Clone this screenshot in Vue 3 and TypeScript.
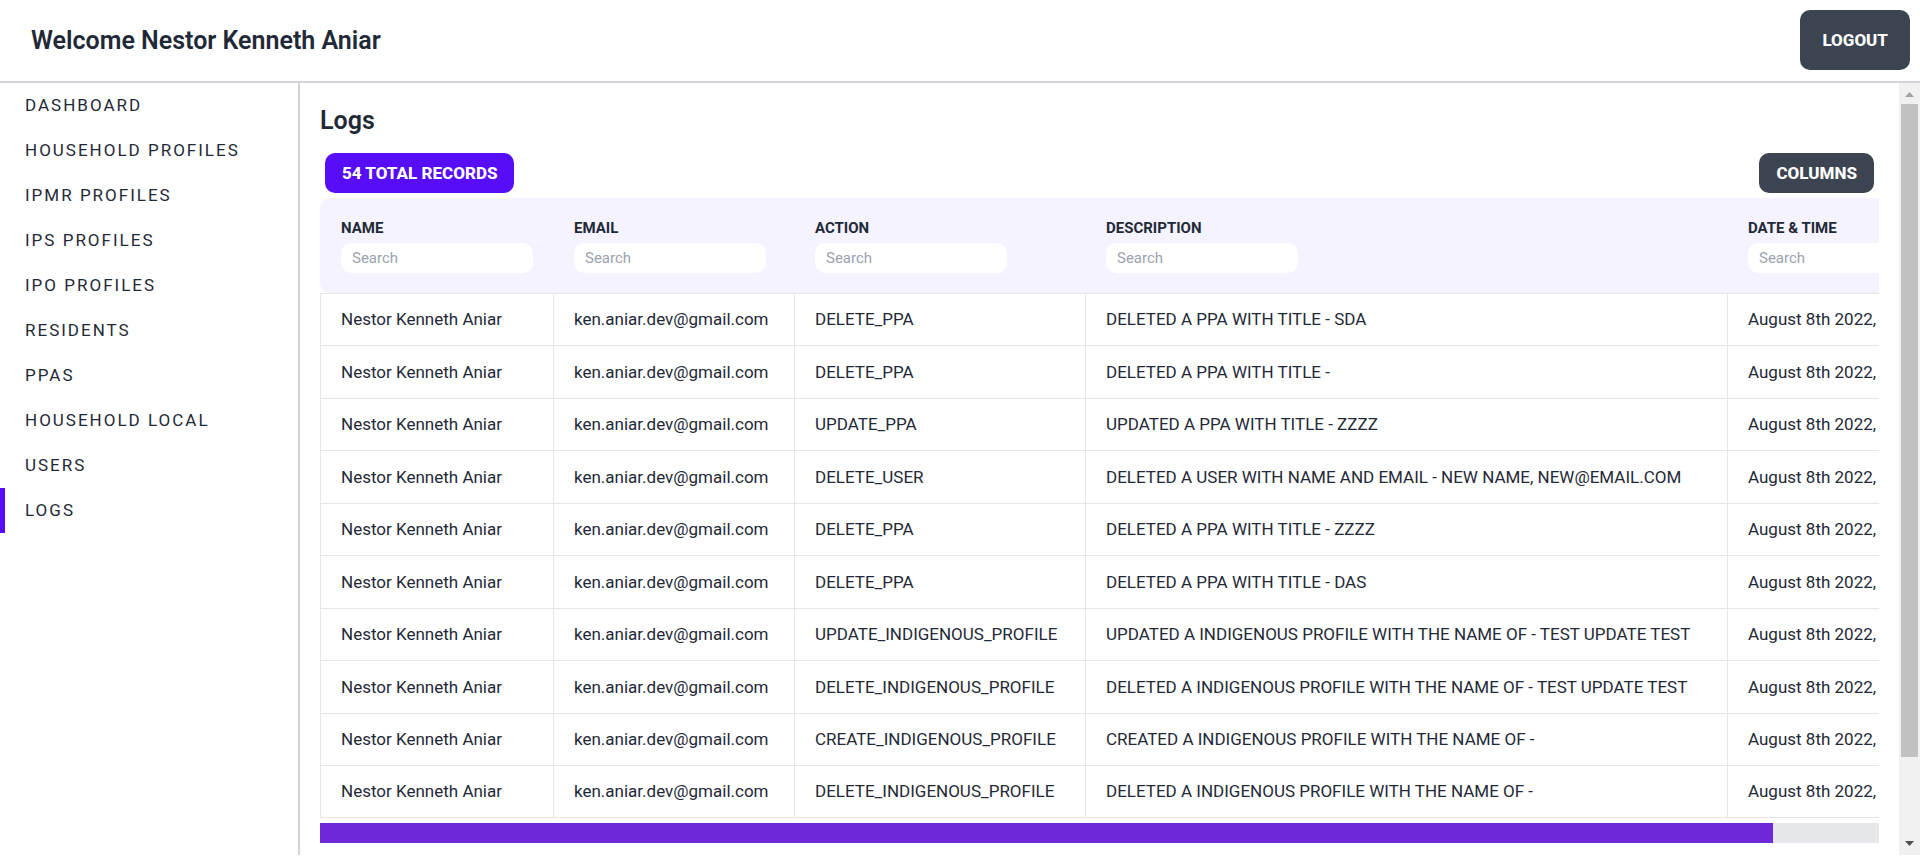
<script setup lang="ts">
interface LogEntry {
  action: string
  description: string
}

const user = { name: 'Nestor Kenneth Aniar', email: 'ken.aniar.dev@gmail.com' }

const links: string[] = [
  'Dashboard',
  'Household Profiles',
  'IPMR Profiles',
  'IPS Profiles',
  'IPO Profiles',
  'Residents',
  'PPAs',
  'Household Local',
  'Users',
  'Logs',
]
const current = 'Logs'

const columns = [
  { id: 'name', label: 'Name' },
  { id: 'email', label: 'Email' },
  { id: 'action', label: 'Action' },
  { id: 'description', label: 'Description' },
  { id: 'date', label: 'Date & Time' },
]

const logs: LogEntry[] = [
  { action: 'DELETE_PPA', description: 'DELETED A PPA WITH TITLE - SDA' },
  { action: 'DELETE_PPA', description: 'DELETED A PPA WITH TITLE -' },
  { action: 'UPDATE_PPA', description: 'UPDATED A PPA WITH TITLE - ZZZZ' },
  { action: 'DELETE_USER', description: 'DELETED A USER WITH NAME AND EMAIL - NEW NAME, NEW@EMAIL.COM' },
  { action: 'DELETE_PPA', description: 'DELETED A PPA WITH TITLE - ZZZZ' },
  { action: 'DELETE_PPA', description: 'DELETED A PPA WITH TITLE - DAS' },
  { action: 'UPDATE_INDIGENOUS_PROFILE', description: 'UPDATED A INDIGENOUS PROFILE WITH THE NAME OF - TEST UPDATE TEST' },
  { action: 'DELETE_INDIGENOUS_PROFILE', description: 'DELETED A INDIGENOUS PROFILE WITH THE NAME OF - TEST UPDATE TEST' },
  { action: 'CREATE_INDIGENOUS_PROFILE', description: 'CREATED A INDIGENOUS PROFILE WITH THE NAME OF -' },
  { action: 'DELETE_INDIGENOUS_PROFILE', description: 'DELETED A INDIGENOUS PROFILE WITH THE NAME OF -' },
]
</script>

<template>
  <div class="app">
    <header class="topbar">
      <h1>Welcome {{ user.name }}</h1>
      <button type="button" class="btn btn-large">Logout</button>
    </header>
    <div class="body">
      <nav class="sidebar">
        <a v-for="link in links" :key="link" href="#" :class="{ active: link === current }">{{ link }}</a>
      </nav>
      <main class="content">
        <h2>Logs</h2>
        <div class="toolbar">
          <span class="btn total">54 Total Records</span>
          <button type="button" class="btn">Columns</button>
        </div>
        <div class="table-view">
          <table>
            <colgroup>
              <col v-for="c in columns" :key="c.id" :class="'col-' + c.id" />
            </colgroup>
            <thead>
              <tr>
                <th v-for="c in columns" :key="c.id" scope="col">
                  <label :for="'search-' + c.id">{{ c.label }}</label>
                  <input :id="'search-' + c.id" type="text" placeholder="Search" />
                </th>
              </tr>
            </thead>
            <tbody>
              <tr v-for="(log, i) in logs" :key="i">
                <td>{{ user.name }}</td>
                <td>{{ user.email }}</td>
                <td>{{ log.action }}</td>
                <td>{{ log.description }}</td>
                <td>August 8th 2022,</td>
              </tr>
            </tbody>
          </table>
        </div>
        <div class="hscroll"><div class="hthumb"></div></div>
      </main>
      <div class="vscroll">
        <svg width="9" height="5" viewBox="0 0 9 5"><path d="M0 5 4.500 0 9 5z" fill="#a3a3a3" /></svg>
        <div class="vtrack"><div class="vthumb"></div></div>
        <svg width="9" height="5" viewBox="0 0 9 5"><path d="M0 0h9L4.500 5z" fill="#505050" /></svg>
      </div>
    </div>
  </div>
</template>

<style>
body {
  margin: 0;
  background: #fff;
}
</style>

<style scoped>
.app {
  display: flex;
  flex-direction: column;
  height: 100vh;
  padding-bottom: 5px;
  box-sizing: border-box;
  overflow: hidden;
  font-family: Roboto, "Liberation Sans", sans-serif;
  font-size: 17px;
  line-height: 25px;
  color: #1f2937;
}
.app *,
.app *::before {
  box-sizing: border-box;
}
.topbar {
  display: flex;
  align-items: center;
  justify-content: space-between;
  flex: none;
  height: 83px;
  padding: 0 10px 1px 31px;
  border-bottom: 2px solid #d1d5db;
}
h1,
h2 {
  margin: 0;
  font-size: 25px;
  line-height: 35px;
  font-weight: 600;
}
.btn {
  display: inline-flex;
  align-items: center;
  height: 40px;
  padding: 0 17px;
  border: 0;
  border-radius: 10px;
  background: #3d4451;
  color: #fff;
  font: inherit;
  font-weight: 800;
  text-transform: uppercase;
  white-space: nowrap;
}
.btn-large {
  height: 60px;
  padding: 0 22px;
}
.total {
  background: #570df8;
}
.body {
  display: flex;
  flex: 1;
  min-height: 0;
}
.sidebar {
  display: flex;
  flex-direction: column;
  flex: none;
  width: 300px;
  border-right: 2px solid #d1d5db;
}
.sidebar a {
  height: 45px;
  padding-left: 20px;
  border-left: 5px solid transparent;
  line-height: 45px;
  letter-spacing: 2px;
  color: inherit;
  text-decoration: none;
  text-transform: uppercase;
}
.sidebar a.active {
  border-left-color: #570df8;
}
.content {
  flex: 1;
  min-width: 0;
  padding: 20px;
}
.toolbar {
  display: flex;
  justify-content: space-between;
  padding: 15px 5px 5px;
}
.table-view {
  overflow: hidden;
}
table {
  table-layout: fixed;
  width: 1722px;
  border-collapse: separate;
  border-spacing: 0;
}
.col-name {
  width: 233px;
}
.col-email {
  width: 241px;
}
.col-action {
  width: 291px;
}
.col-description {
  width: 642px;
}
.col-date {
  width: 315px;
}
th {
  height: 95px;
  padding: 0 20px 0 21px;
  background: #f5f3ff;
  font-size: 15px;
  line-height: 20px;
  text-align: left;
  text-transform: uppercase;
}
th:first-child {
  border-radius: 10px 0 0 10px;
}
th label {
  display: block;
  margin-bottom: 5px;
}
th input {
  display: block;
  width: 192px;
  height: 30px;
  padding: 0 11px;
  border: 0;
  border-radius: 10px;
  background: #fff;
  font: inherit;
  font-weight: 400;
  color: inherit;
}
th input::placeholder {
  color: #9ca3af;
  opacity: 1;
}
td {
  height: 52px;
  padding: 0 0 0 20px;
  border-top: 1px solid #e5e7eb;
  border-left: 1px solid #e5e7eb;
  white-space: nowrap;
}
tr:nth-child(even) td {
  height: 53px;
}
tr:last-child td {
  border-bottom: 1px solid #e5e7eb;
}
.hscroll {
  height: 20px;
  margin-top: 5px;
  background: #e5e7eb;
}
.hthumb {
  width: 93.2%;
  height: 100%;
  background: #6d28d9;
}
.vscroll {
  display: flex;
  flex-direction: column;
  align-items: center;
  flex: none;
  width: 21px;
  padding: 9px 0;
  background: #f1f1f1;
}
.vtrack {
  flex: 1;
  width: 17px;
  padding: 7px 0;
}
.vthumb {
  height: 89.5%;
  background: #c1c1c1;
}
</style>
